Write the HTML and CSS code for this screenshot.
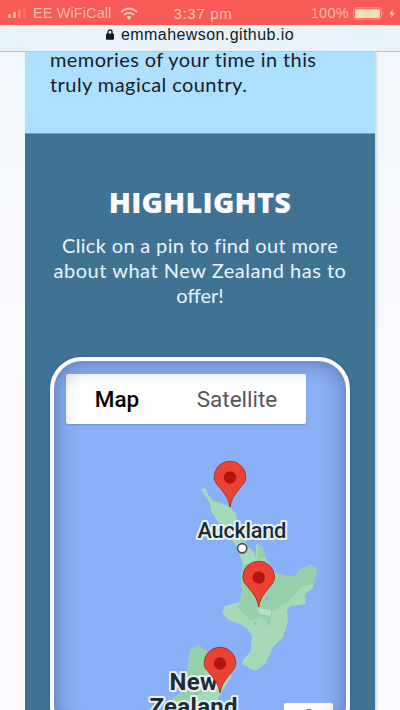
FILE: index.html
```html
<!DOCTYPE html>
<html lang="en">
<head>
<meta charset="utf-8">
<meta name="viewport" content="width=device-width, initial-scale=1">
<title>New Zealand</title>
<link rel="stylesheet" href="styles.css">
</head>
<body>
<header class="browser">
  <div class="status">
    <div class="carrier">
      <svg class="signal" width="22" height="12" viewBox="0 0 22 12"><rect x="0" y="7" width="3" height="4" rx="1" opacity=".85"/><rect x="5" y="5" width="3" height="6" rx="1" opacity=".85"/><rect x="10" y="3" width="3" height="8" rx="1" opacity=".4"/><rect x="15" y="1" width="3" height="10" rx="1" opacity=".2"/></svg>
      <span class="network">EE WiFiCall</span>
      <svg class="wifi" width="18" height="13" viewBox="0 0 18 13"><path d="M1 5Q9-2 17 5M4 8Q9 3.5 14 8" fill="none" stroke="#ffc7b9" stroke-width="2"/><path d="M6.3 10Q9 7.8 11.7 10L9 12.8Z"/></svg>
    </div>
    <span class="time">3:37 pm</span>
    <div class="power">
      <span class="percent">100%</span>
      <svg width="42" height="13" viewBox="0 0 42 13"><rect x=".5" y=".8" width="28" height="11.4" rx="2.5" fill="none" stroke="#f69b8b"/><rect x="2" y="2.3" width="25" height="8.6" rx="1" fill="#efe0bb"/><path d="M29.5 4.5q1.8 2 0 4" fill="#f69b8b"/><path d="M39.8 2L36 7.2h2.6L38 11l4-5.2h-2.7z"/></svg>
    </div>
  </div>
  <div class="address">
    <svg width="8" height="11" viewBox="0 0 8 11"><path d="M2 5V3a2 2 0 0 1 4 0v2" fill="none" stroke="#111b20" stroke-width="1.3"/><rect x="0" y="4.6" width="8" height="6.2" rx="1" fill="#111b20"/></svg>
    <span class="host">emmahewson.github.io</span>
  </div>
</header>
<main class="page">
  <section class="intro">
    <p><span class="line i1">memories of your time in this</span><span class="line i2">truly magical country.</span></p>
  </section>
  <section class="highlights">
    <h2><span>HIGHLIGHTS</span></h2>
    <p><span class="line h1">Click on a pin to find out more</span><span class="line h2">about what New Zealand has to</span><span class="line h3">offer!</span></p>
    <div class="map">
      <svg class="terrain" width="292" height="349" viewBox="54 361 292 349">
        <defs>
          <g id="pin"><path d="M0 0C-1.4-9-5.5-13-9.5-18.500C-13-23-15.8-25-15.8-30A15.8 15.8 0 0 1 15.8-30C15.8-25 13-23 9.500-18.500C5.5-13 1.4-9 0 0Z" fill="#ea4335" stroke="#a52c25" stroke-width=".9"/><circle cy="-29.500" r="6.2" fill="#b31412"/></g>
        </defs>
        <path d="M201 489L206 488L207 493L213 501L221 503L230 507L236 514L238 523L245 534L247 546L253 551L256 557L256 544L263 548L265 557L275 573L293 577L299 572L301 568L311 565L317 569L313 588L305 594L306 604L291 606L287 610L288 621L283 637L274 646L265 664L255 671L242 664L243 660L251 651L252 636L247 628L240 624L228 620L222 612L225 606L240 602L242 591L241 575L244 568L240 555L235 544L226 532L216 519L211 511L210 503L205 496Z" fill="#a5d9b8"/>
        <path d="M275 573L293 577L299 572L301 568L311 565L317 569L314 584L302 586L287 603L272 612L270 627L262 617L250 620L238 608L242 590L241 575L244 566Z" fill="#95d0aa"/>
        <path d="M243 540L235 537L230 524L240 530ZM258 544L263 548L265 557L258 561ZM242 565L265 560L276 577L244 580Z" fill="#95d0aa"/>
        <path d="M257 608L271 610L271 616L260 614Z" fill="#b9dfc8"/>
        <path d="M265 598l3-2 1 4-3 1zM254 621l3 2-2 2z" fill="#8ab4f8"/>
        <path d="M190 650L198 645L205 650L218 662L232 676L223 690L214 706L211 714H166L171 699L186 690L187 671Z" fill="#a5d9b8"/>
        <path d="M190 650L198 645L205 650L210 662L204 674L213 686L190 700L182 714H166L171 699L186 690L187 671Z" fill="#95d0aa"/>
        <g class="labels">
          <text class="city" x="197.500" y="538" textLength="89">Auckland</text>
          <circle cx="242.200" cy="548.300" r="4.600" fill="#fff" stroke="#46525a" stroke-width="1.7"/>
          <text class="country" x="169.500" y="690" textLength="48">New</text>
          <text class="country" x="149.500" y="715" textLength="88">Zealand</text>
        </g>
        <use href="#pin" x="230" y="507"/><use href="#pin" x="258.700" y="607"/><use href="#pin" x="220" y="693"/>
      </svg>
      <div class="types"><button class="active"><span>Map</span></button><button><span>Satellite</span></button></div>
      <div class="pegman"><svg width="12" height="8" viewBox="0 0 12 8"><circle cx="6" cy="6" r="5" fill="#666"/></svg></div>
    </div>
  </section>
</main>
</body>
</html>
```
FILE: styles.css
```css
* { box-sizing: border-box; }
body { margin: 0; height: 710px; overflow: hidden; background: linear-gradient(#f2f8fd 50px, #f8f9fe 280px, #fdfbff 400px); font-family: Lato, sans-serif; }
.browser { height: 52px; border-bottom: 1px solid #afc4cf; background: #e7f2fb; font-family: "Liberation Sans", sans-serif; }
.status { height: 25px; display: grid; grid-template-columns: 1fr auto 1fr; align-items: center; padding: 1px 4px 0 8px; background: #f85b55; color: #ffb9aa; fill: #ffc7b9; font-size: 14.5px; }
.carrier, .power { display: flex; align-items: center; }
.signal { margin-right: 3px; }
.wifi { margin-left: 9px; }
.network { letter-spacing: .1px; }
.power { justify-content: flex-end; gap: 4px; margin-right: 1px; }
.percent { letter-spacing: .3px; }
.time { letter-spacing: .7px; color: #ffc2b4; font-size: 15px; position: relative; left: 1px; }
.address { height: 19px; display: flex; justify-content: center; align-items: center; gap: 7px; color: #111b20; font-size: 16px; letter-spacing: .42px; }
.page { width: 350px; height: 658px; margin: 0 25px; overflow: hidden; box-shadow: 2px 0 2px #d5dae3; }
.line { display: block; width: max-content; white-space: nowrap; }
.i1 { letter-spacing: .39px; }
.i2 { letter-spacing: .43px; }
.h1 { letter-spacing: .34px; }
.h2 { letter-spacing: .52px; }
p { margin: 0; font-size: 20px; line-height: 25px; }
.intro { height: 81px; padding: 0 25px; background: #ade0ff; color: #152027; overflow: hidden; }
.intro p { margin-top: -5px; }
.highlights { height: 577px; padding: 49px 25px 0; background: #407393; color: #e9f5ff; border-top: 1px solid #74a4c0; }
.highlights h2 { margin: 0; display: flex; justify-content: center; font: 800 29px/38px "Open Sans", sans-serif; letter-spacing: .2px; color: #fbfbff; }
.highlights p { display: flex; flex-direction: column; align-items: center; margin-top: 12px; }
.map { position: relative; width: 300px; height: 380px; margin-top: 49px; border: 4px solid #fff; border-radius: 32px; overflow: hidden; background: #8ab1f8; box-shadow: 0 0 2px #28587a; font-family: Roboto, sans-serif; }
.map::after { content: ""; position: absolute; inset: 0; border-radius: 28px; box-shadow: inset 0 0 22px rgba(35, 45, 80, .5); pointer-events: none; }
.terrain { display: block; }
.labels text { fill: #202b32; stroke: #e7f2f6; stroke-width: 4px; paint-order: stroke; stroke-linejoin: round; }
.city { font-size: 22px; font-weight: 500; }
.country { font-size: 24px; font-weight: 700; }
.types { position: absolute; left: 12px; top: 13px; width: 240px; height: 50px; display: flex; background: #fff; border-radius: 2px; box-shadow: 0 1px 2px rgba(0, 0, 0, .2); }
.types button { flex: 138px 0 0; border: 0; padding: 0; background: none; color: #565656; font: 400 22.5px Roboto, sans-serif; }
.types button.active { flex-basis: 102px; color: #000; font-weight: 500; }
.pegman { position: absolute; left: 230px; top: 342px; width: 49px; height: 50px; display: flex; justify-content: center; padding-top: 5px; background: #fff; border-radius: 2px; }
```
